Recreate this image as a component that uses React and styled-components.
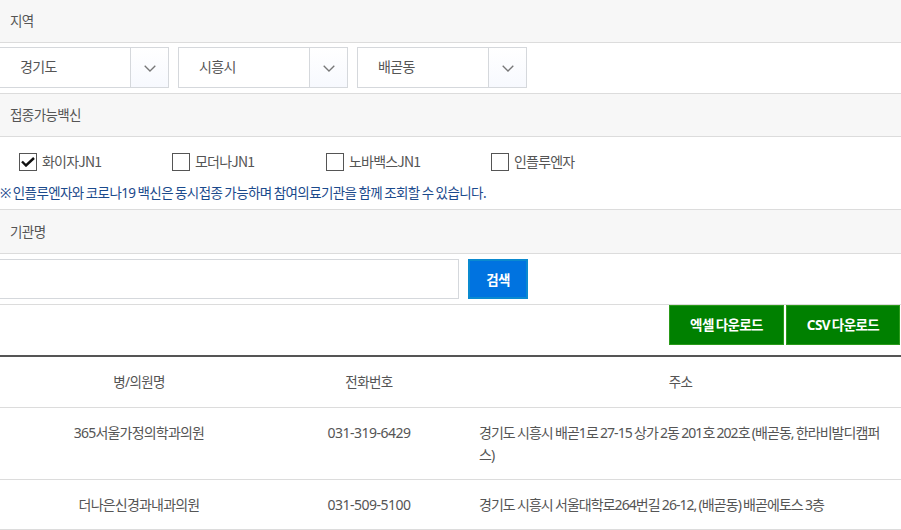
import React from "react";
import styled, {createGlobalStyle} from "styled-components";

const GlobalStyle = createGlobalStyle`
html, body {
  margin: 0;
  padding: 0;
  background: #fff;
  overflow: hidden;
}
body {
  font-family: "Noto Sans", "Noto Sans CJK KR", sans-serif;
  font-size: 14px;
  color: #555;
  letter-spacing: -0.6px;
  word-spacing: -1px;
}
* {
  box-sizing: border-box;
}
`;

const Page = styled.div`
width: 901px;
height: 530px;
overflow: hidden;
`;

const SectionTitle = styled.div`
display: flex;
align-items: center;
height: ${props => props.h || 43}px;
padding: 0 0 2px 10px;
background: #f7f7f7;
border-bottom: 1px solid #dcdcdc;
color: #555;
font-size: 13.5px;
`;

const SelectRow = styled.div`
display: flex;
align-items: center;
gap: 9px;
height: 51px;
margin-left: -1px;
padding-bottom: 1px;
border-bottom: 1px solid #dcdcdc;
`;

const SelectBox = styled.div`
display: flex;
width: 170px;
height: 41px;
border: 1px solid #d5d8dc;
background: #fff;
`;

const SelectValue = styled.span`
flex: 1;
display: flex;
align-items: center;
padding: 0 0 3px 20px;
color: #555;
`;

const SelectArrow = styled.span`
display: flex;
align-items: center;
justify-content: center;
width: 38px;
padding-top: 2px;
border-left: 1px solid #d5d8dc;
background: linear-gradient(#fff, #f7f9fe);
color: #777;
`;

const CheckRow = styled.div`
display: flex;
align-items: center;
height: 50px;
padding-left: 19px;
`;

const CheckItem = styled.label`
display: flex;
align-items: center;
gap: 5px;
width: ${props => props.w}px;
color: #555;
`;

const CheckLabel = styled.span`
padding-bottom: 2px;
font-family: "Noto Sans CJK KR", sans-serif;
letter-spacing: -0.8px;
`;

const CheckMark = styled.span`
display: flex;
align-items: center;
justify-content: center;
width: 18px;
height: 18px;
border: 1px solid #555;
background: #fff;
`;

const Notice = styled.p`
margin: 0;
height: 23px;
line-height: 12px;
border-bottom: 1px solid #dcdcdc;
color: #1b4a8c;
font-size: 13.5px;
word-spacing: -0.85px;
`;

const SearchRow = styled.div`
display: flex;
align-items: center;
gap: 9px;
height: 51px;
padding-bottom: 1px;
margin-left: -1px;
border-bottom: 1px solid #dcdcdc;
`;

const SearchInput = styled.input`
width: 460px;
height: 40px;
border: 1px solid #d5d8dc;
background: #fff;
outline: none;
`;

const SearchButton = styled.button`
width: 60px;
height: 40px;
padding: 0;
border: 2px solid #0a8ad0;
background: #0073e0;
color: #fff;
font: inherit;
font-weight: 700;
font-size: 13.5px;
letter-spacing: inherit;
`;

const DownloadRow = styled.div`
display: flex;
justify-content: flex-end;
gap: 2px;
height: 52px;
padding: 0 1px 10px 0;
border-bottom: 2px solid #555;
`;

const DownloadButton = styled.button`
width: ${props => props.w}px;
height: 40px;
padding: 0 0 2px;
border: 1px solid #2a9a1a;
background: #008000;
color: #fff;
font: inherit;
font-weight: 700;
font-size: 13.5px;
letter-spacing: inherit;
word-spacing: inherit;
`;

const Table = styled.table`
width: 901px;
table-layout: fixed;
border-collapse: separate;
border-spacing: 0;
`;

const HeadCell = styled.th`
height: 51px;
padding: 0 0 2px;
font-weight: 400;
color: #555;
font-size: 13.5px;
border-bottom: 1px solid #dcdcdc;
`;

const Cell = styled.td`
padding: 14px 0 13px;
vertical-align: top;
text-align: center;
line-height: 22px;
color: #555;
letter-spacing: ${props => props.spacing || "-0.8px"};
border-bottom: 1px solid #dcdcdc;
`;

const AddressCell = styled(Cell)`
padding: 14px 15px 13px 19px;
text-align: left;
letter-spacing: -0.95px;
word-spacing: -0.5px;
`;

const Chevron = () => (
  <svg width="12" height="7" viewBox="0 0 12 7" fill="none" stroke="currentColor" strokeWidth="1.3">
    <path d="M0.7 0.7 L6 6 L11.3 0.7"/>
  </svg>
);

const REGIONS = ["경기도", "시흥시", "배곧동"];
const VACCINES = [
  {name: "화이자JN1", w: 153, checked: true},
  {name: "모더나JN1", w: 154},
  {name: "노바백스JN1", w: 165},
  {name: "인플루엔자", w: 120},
];
const CLINICS = [
  {name: "365서울가정의학과의원", tel: "031-319-6429", addr: "경기도 시흥시 배곧1로 27-15 상가 2동 201호 202호 (배곧동, 한라비발디캠퍼스)"},
  {name: "더나은신경과내과의원", tel: "031-509-5100", addr: "경기도 시흥시 서울대학로264번길 26-12, (배곧동) 배곧에토스 3층"},
];

export default function App() {
  return (
    <Page>
      <GlobalStyle/>
      <SectionTitle>지역</SectionTitle>
      <SelectRow>
        {REGIONS.map(region => (
          <SelectBox key={region}>
            <SelectValue>{region}</SelectValue>
            <SelectArrow><Chevron/></SelectArrow>
          </SelectBox>
        ))}
      </SelectRow>
      <SectionTitle>접종가능백신</SectionTitle>
      <CheckRow>
        {VACCINES.map(v => (
          <CheckItem key={v.name} w={v.w}>
            <CheckMark>
              {v.checked && (
                <svg width="14" height="10" viewBox="0 0 14 10" fill="none" stroke="#111" strokeWidth="2.4">
                  <path d="M1 4.5 L5 8.5 L13 1"/>
                </svg>
              )}
            </CheckMark>
            <CheckLabel>{v.name}</CheckLabel>
          </CheckItem>
        ))}
      </CheckRow>
      <Notice>※ 인플루엔자와 코로나19 백신은 동시접종 가능하며 참여의료기관을 함께 조회할 수 있습니다.</Notice>
      <SectionTitle h={44}>기관명</SectionTitle>
      <SearchRow>
        <SearchInput/>
        <SearchButton>검색</SearchButton>
      </SearchRow>
      <DownloadRow>
        <DownloadButton w={115}>엑셀 다운로드</DownloadButton>
        <DownloadButton w={114}>CSV 다운로드</DownloadButton>
      </DownloadRow>
      <Table>
        <colgroup>
          <col width="278"/>
          <col width="182"/>
          <col/>
        </colgroup>
        <thead>
          <tr>
            <HeadCell>병/의원명</HeadCell>
            <HeadCell>전화번호</HeadCell>
            <HeadCell>주소</HeadCell>
          </tr>
        </thead>
        <tbody>
          {CLINICS.map(c => (
            <tr key={c.tel}>
              <Cell>{c.name}</Cell>
              <Cell spacing="-0.5px">{c.tel}</Cell>
              <AddressCell>{c.addr}</AddressCell>
            </tr>
          ))}
        </tbody>
      </Table>
    </Page>
  );
}
